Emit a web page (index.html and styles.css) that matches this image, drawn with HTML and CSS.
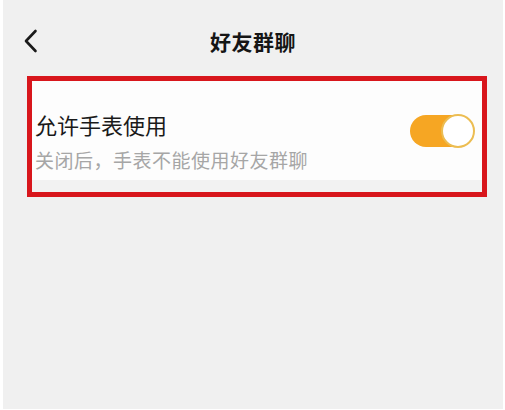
FILE: index.html
```html
<!DOCTYPE html>
<html lang="zh-CN">
<head>
    <meta charset="UTF-8">
    <title>好友群聊</title>
    <meta name="viewport" content="width=device-width, initial-scale=1.0">
    <link rel="stylesheet" href="styles.css">
</head>
<body>
    <div class="header">
        <div class="backBtn">
            <svg width="16" height="26" viewBox="0 0 16 26">
                <path d="M12.5 3 L3 13 L12.5 23" fill="none" stroke="#1a1a1a" stroke-width="2.6" stroke-linecap="round" stroke-linejoin="round"/>
            </svg>
        </div>
        <div class="pageTitle">好友群聊</div>
        <div></div>
    </div>

    <div class="highlight">
        <div class="settingCard">
            <div class="settingText">
                <div class="settingName">允许手表使用</div>
                <div class="settingDesc">关闭后，手表不能使用好友群聊</div>
            </div>
            <div class="switch">
                <div class="knob"></div>
            </div>
        </div>
    </div>
</body>
</html>
```

FILE: styles.css
```css
html {
    background: #ffffff;
}
body {
    margin: 0 2px 1px 3px;
    height: 409px;
    background: #f0f0f0;
    font-family: "Noto Sans CJK SC", "Noto Sans", sans-serif;
    overflow: hidden;
}
.header {
    height: 76px;
    padding-top: 6px;
    box-sizing: border-box;
    display: grid;
    grid-template-columns: 1fr auto 1fr;
    align-items: center;
}
.backBtn {
    padding-left: 20px;
    display: flex;
    align-items: center;
}
.pageTitle {
    font-size: 21px;
    font-weight: bold;
    color: #151515;
    letter-spacing: 0.5px;
}
.highlight {
    margin-left: 24px;
    width: 460px;
    height: 121px;
    box-sizing: border-box;
    border: 5px solid #d8161c;
    background: #f2f2f2;
}
.settingCard {
    height: 99px;
    background: #fdfdfd;
    display: flex;
    justify-content: space-between;
    align-items: center;
    padding: 0 8px 0 3px;
}
.settingText {
    align-self: flex-start;
    padding-top: 27px;
}
.settingName {
    font-size: 22px;
    line-height: 32px;
    color: #1a1a1a;
}
.settingDesc {
    margin-top: 6px;
    font-size: 19px;
    line-height: 28px;
    letter-spacing: 0.5px;
    color: #a6a6a6;
}
.switch {
    width: 64px;
    height: 32px;
    border-radius: 16px;
    background: #f6a623;
    display: flex;
    justify-content: flex-end;
    align-items: center;
}
.knob {
    width: 34px;
    height: 34px;
    margin: -1px -1px -1px 0;
    box-sizing: border-box;
    border-radius: 50%;
    background: #ffffff;
    border: 2px solid #ecbd52;
}
```
